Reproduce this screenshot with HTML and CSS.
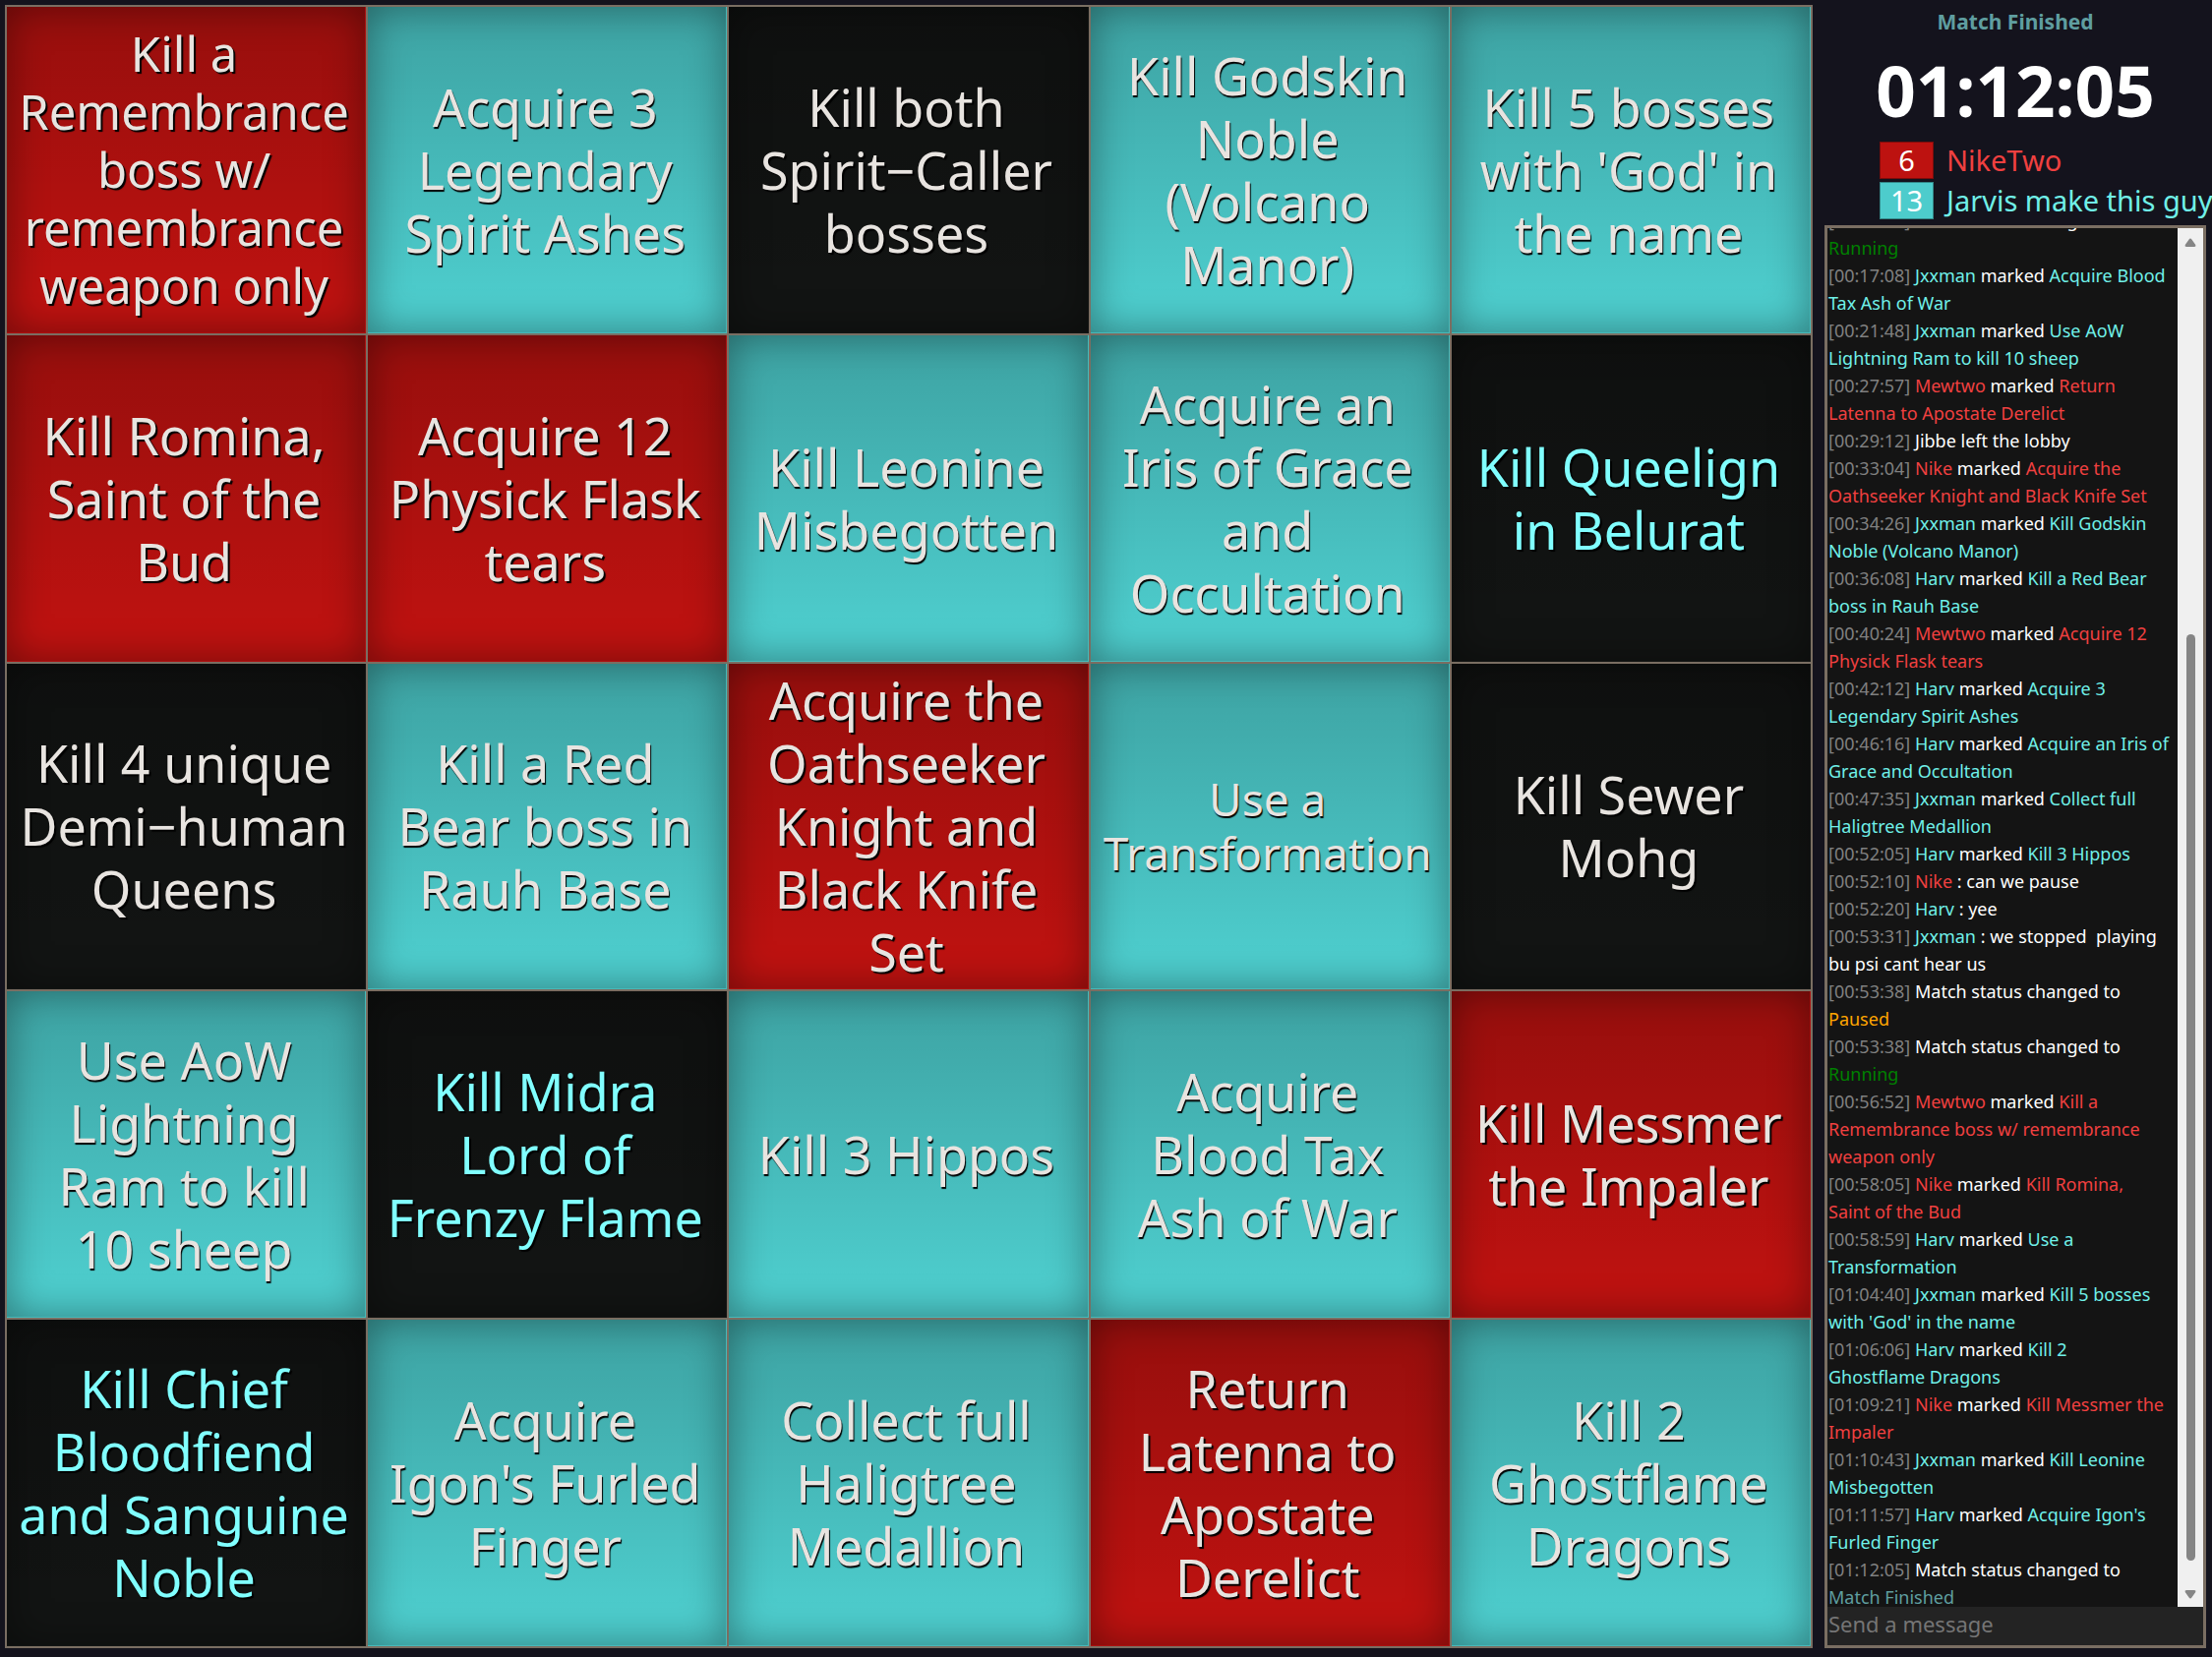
FILE: index.html
```
<!DOCTYPE html>
<html lang="en">
<head>
<meta charset="utf-8">
<meta name="viewport" content="width=device-width, initial-scale=1">
<title>Bingo match</title>
<link rel="stylesheet" href="styles.css">
</head>
<body>
<main class="board" aria-label="Bingo board">
  <button class="cell red small" type="button">Kill a<br>Remembrance<br>boss w/<br>remembrance<br>weapon only</button>
  <button class="cell teal" type="button">Acquire 3<br>Legendary<br>Spirit Ashes</button>
  <button class="cell" type="button">Kill both<br>Spirit−Caller<br>bosses</button>
  <button class="cell teal" type="button">Kill Godskin<br>Noble<br>(Volcano<br>Manor)</button>
  <button class="cell teal" type="button">Kill 5 bosses<br>with 'God' in<br>the name</button>

  <button class="cell red" type="button">Kill Romina,<br>Saint of the<br>Bud</button>
  <button class="cell red" type="button">Acquire 12<br>Physick Flask<br>tears</button>
  <button class="cell teal" type="button">Kill Leonine<br>Misbegotten</button>
  <button class="cell teal" type="button">Acquire an<br>Iris of Grace<br>and<br>Occultation</button>
  <button class="cell starred" type="button">Kill Queelign<br>in Belurat</button>

  <button class="cell" type="button">Kill 4 unique<br>Demi−human<br>Queens</button>
  <button class="cell teal" type="button">Kill a Red<br>Bear boss in<br>Rauh Base</button>
  <button class="cell red" type="button">Acquire the<br>Oathseeker<br>Knight and<br>Black Knife<br>Set</button>
  <button class="cell teal smaller" type="button">Use a<br>Transformation</button>
  <button class="cell" type="button">Kill Sewer<br>Mohg</button>

  <button class="cell teal" type="button">Use AoW<br>Lightning<br>Ram to kill<br>10 sheep</button>
  <button class="cell starred" type="button">Kill Midra<br>Lord of<br>Frenzy Flame</button>
  <button class="cell teal" type="button">Kill 3 Hippos</button>
  <button class="cell teal" type="button">Acquire<br>Blood Tax<br>Ash of War</button>
  <button class="cell red" type="button">Kill Messmer<br>the Impaler</button>

  <button class="cell starred" type="button">Kill Chief<br>Bloodfiend<br>and Sanguine<br>Noble</button>
  <button class="cell teal" type="button">Acquire<br>Igon's Furled<br>Finger</button>
  <button class="cell teal" type="button">Collect full<br>Haligtree<br>Medallion</button>
  <button class="cell red" type="button">Return<br>Latenna to<br>Apostate<br>Derelict</button>
  <button class="cell teal" type="button">Kill 2<br>Ghostflame<br>Dragons</button>
</main>

<aside class="sidebar">
  <header class="match">
    <p class="status">Match Finished</p>
    <p class="timer">01:12:05</p>
    <ul class="teams">
      <li class="team"><span class="score score-red">6</span><span class="name r">NikeTwo</span></li>
      <li class="team"><span class="score score-teal">13</span><span class="name t">Jarvis make this guy</span></li>
    </ul>
  </header>
  <section class="chat" aria-label="Match log">
    <div class="log">
      <ol class="lines">
        <li><time>[00:16:31]</time> Match status changed to<br><span class="running">Running</span></li>
        <li><time>[00:17:08]</time> <span class="t">Jxxman</span> marked <span class="t">Acquire Blood<br>Tax Ash of War</span></li>
        <li><time>[00:21:48]</time> <span class="t">Jxxman</span> marked <span class="t">Use AoW<br>Lightning Ram to kill 10 sheep</span></li>
        <li><time>[00:27:57]</time> <span class="r">Mewtwo</span> marked <span class="r">Return<br>Latenna to Apostate Derelict</span></li>
        <li><time>[00:29:12]</time> Jibbe left the lobby</li>
        <li><time>[00:33:04]</time> <span class="r">Nike</span> marked <span class="r">Acquire the<br>Oathseeker Knight and Black Knife Set</span></li>
        <li><time>[00:34:26]</time> <span class="t">Jxxman</span> marked <span class="t">Kill Godskin<br>Noble (Volcano Manor)</span></li>
        <li><time>[00:36:08]</time> <span class="t">Harv</span> marked <span class="t">Kill a Red Bear<br>boss in Rauh Base</span></li>
        <li><time>[00:40:24]</time> <span class="r">Mewtwo</span> marked <span class="r">Acquire 12<br>Physick Flask tears</span></li>
        <li><time>[00:42:12]</time> <span class="t">Harv</span> marked <span class="t">Acquire 3<br>Legendary Spirit Ashes</span></li>
        <li><time>[00:46:16]</time> <span class="t">Harv</span> marked <span class="t">Acquire an Iris of<br>Grace and Occultation</span></li>
        <li><time>[00:47:35]</time> <span class="t">Jxxman</span> marked <span class="t">Collect full<br>Haligtree Medallion</span></li>
        <li><time>[00:52:05]</time> <span class="t">Harv</span> marked <span class="t">Kill 3 Hippos</span></li>
        <li><time>[00:52:10]</time> <span class="r">Nike</span> : can we pause</li>
        <li><time>[00:52:20]</time> <span class="t">Harv</span> : yee</li>
        <li><time>[00:53:31]</time> <span class="t">Jxxman</span> : we stopped&nbsp; playing<br>bu psi cant hear us</li>
        <li><time>[00:53:38]</time> Match status changed to<br><span class="paused">Paused</span></li>
        <li><time>[00:53:38]</time> Match status changed to<br><span class="running">Running</span></li>
        <li><time>[00:56:52]</time> <span class="r">Mewtwo</span> marked <span class="r">Kill a<br>Remembrance boss w/ remembrance<br>weapon only</span></li>
        <li><time>[00:58:05]</time> <span class="r">Nike</span> marked <span class="r">Kill Romina,<br>Saint of the Bud</span></li>
        <li><time>[00:58:59]</time> <span class="t">Harv</span> marked <span class="t">Use a<br>Transformation</span></li>
        <li><time>[01:04:40]</time> <span class="t">Jxxman</span> marked <span class="t">Kill 5 bosses<br>with 'God' in the name</span></li>
        <li><time>[01:06:06]</time> <span class="t">Harv</span> marked <span class="t">Kill 2<br>Ghostflame Dragons</span></li>
        <li><time>[01:09:21]</time> <span class="r">Nike</span> marked <span class="r">Kill Messmer the<br>Impaler</span></li>
        <li><time>[01:10:43]</time> <span class="t">Jxxman</span> marked <span class="t">Kill Leonine<br>Misbegotten</span></li>
        <li><time>[01:11:57]</time> <span class="t">Harv</span> marked <span class="t">Acquire Igon's<br>Furled Finger</span></li>
        <li><time>[01:12:05]</time> Match status changed to<br><span class="finished">Match Finished</span></li>
      </ol>
      <div class="scrollbar" aria-hidden="true">
        <svg class="arrow" viewBox="0 0 12 10"><path d="M6 0.5 Q6.8 0.5 7.4 1.5 L11.3 7 Q12 9 10 9 H2 Q0 9 0.7 7 L4.6 1.5 Q5.2 0.5 6 0.5Z"/></svg>
        <div class="track"><div class="thumb"></div></div>
        <svg class="arrow" viewBox="0 0 12 10"><path d="M6 9.5 Q6.8 9.5 7.4 8.5 L11.3 3 Q12 1 10 1 H2 Q0 1 0.7 3 L4.6 8.5 Q5.2 9.5 6 9.5Z"/></svg>
      </div>
    </div>
    <input class="message" type="text" placeholder="Send a message" aria-label="Send a message">
  </section>
</aside>
</body>
</html>
```
FILE: styles.css
```
* {
  box-sizing: border-box;
}

body {
  display: flex;
  gap: 12px;
  height: 100vh;
  margin: 0;
  padding: 5px 6px 9px 5px;
  overflow: hidden;
  background: #14131d;
  color: #fff;
  font-family: "Noto Sans", "Open Sans", sans-serif;
}

p, ul, ol {
  margin: 0;
  padding: 0;
  list-style: none;
}

/* Board */
.board {
  flex: 1;
  min-width: 0;
  display: grid;
  grid-template-columns: repeat(5, minmax(0, 1fr));
  grid-template-rows: repeat(5, minmax(0, 1fr));
  gap: 2px;
  padding: 2px;
  background: #7a6e62;
}

.cell {
  --edge: #121413;
  margin: 0;
  padding: 0 5px 0 0;
  border: 0;
  background: #121413 linear-gradient(rgba(0, 0, 0, .2), rgba(0, 0, 0, .16) 20%, transparent 90%);
  box-shadow: inset -1px -1px 0 var(--edge), inset 0 0 40px rgba(0, 0, 0, .4);
  color: #e8e4e0;
  font-family: inherit;
  font-size: 52px;
  line-height: 64px;
  text-align: center;
  text-shadow: 2px 2px 1px #000;
  white-space: nowrap;
  cursor: pointer;
}

.red {
  --edge: #ac100f;
  background-color: #bd1210;
}

.teal {
  --edge: #46baba;
  background-color: #4dcccc;
  text-shadow: 1px 2px 1px #000;
}

.starred {
  color: #80ffff;
}

.small {
  font-size: 49px;
  line-height: 59px;
}

.smaller {
  font-size: 46px;
  line-height: 55px;
}

/* Sidebar */
.sidebar {
  flex: 0 0 388px;
  display: flex;
  flex-direction: column;
  min-width: 0;
  min-height: 0;
}

.match {
  display: flex;
  flex-direction: column;
  align-items: center;
  margin-bottom: 6px;
}

.status {
  color: #5f9ea0;
  font-size: 21px;
  font-weight: 700;
  line-height: 34px;
}

.timer {
  font-size: 71px;
  font-weight: 700;
  line-height: 105px;
}

.teams {
  align-self: stretch;
  display: flex;
  flex-direction: column;
  gap: 3px;
  padding-left: 56px;
}

.team {
  display: flex;
  gap: 13px;
  font-size: 29px;
  line-height: 38px;
  white-space: nowrap;
}

.score {
  flex: 0 0 55px;
  height: 38px;
  border: 1px solid;
  line-height: 36px;
  text-align: center;
}

.score-red {
  border-color: #7d0c0b;
  background: #bd1210;
}

.score-teal {
  border-color: #338888;
  background: #4dcccc;
}

.r {
  color: #f04040;
}

.t {
  color: #70f0e8;
}

.chat {
  flex: 1;
  min-height: 0;
  display: flex;
  flex-direction: column;
  border: 3px solid #7a6e62;
  background: #141414;
}

.log {
  flex: 1;
  min-height: 0;
  display: flex;
  overflow: hidden;
}

.lines {
  flex: 1;
  min-width: 0;
  align-self: flex-end;
  margin-bottom: -4px;
  padding-left: 1px;
  font-size: 18px;
  line-height: 28px;
  white-space: nowrap;
}

.lines time {
  color: #808080;
}

.running {
  color: #008000;
}

.paused {
  color: #ffa500;
}

.finished {
  color: #5f9ea0;
}

.scrollbar {
  flex: 0 0 26px;
  display: flex;
  flex-direction: column;
  align-items: center;
  padding: 10px 0 8px;
  background: #f0f0f0;
}

.arrow {
  width: 12px;
  height: 10px;
  fill: #858585;
}

.track {
  flex: 1;
  display: flex;
  flex-direction: column;
  justify-content: flex-end;
  padding: 8px 0 29px;
}

.thumb {
  width: 9px;
  height: 71%;
  border-radius: 5px;
  background: #858585;
}

.message {
  height: 39px;
  margin: 0;
  padding: 0 1px 5px;
  border: 0;
  background: #232323;
  color: #fff;
  font-family: inherit;
  font-size: 22px;
}

.message::placeholder {
  color: #757575;
}
```
